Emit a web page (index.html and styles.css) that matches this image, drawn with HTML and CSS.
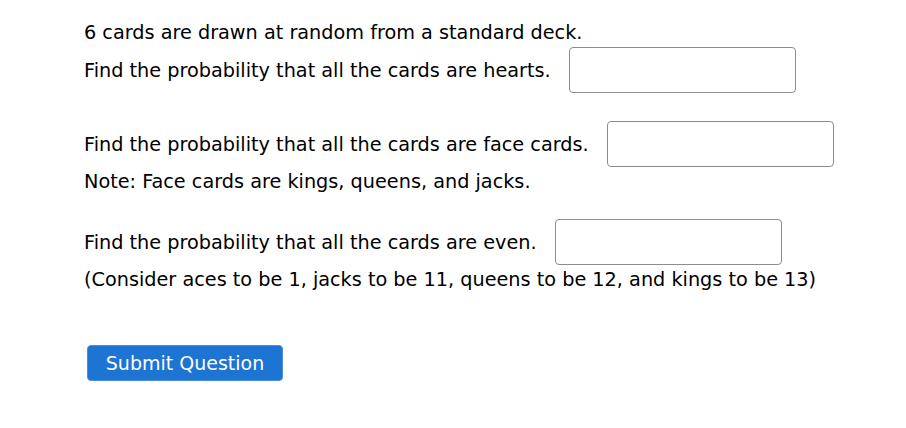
FILE: index.html
```html
<!DOCTYPE html>
<html><head><link rel="stylesheet" href="styles.css"></head>
<body>
<div class="question">
  <div class="row line">6 cards are drawn at random from a standard deck.</div>
  <div class="row field r2"><span>Find the probability that all the cards are hearts.</span><input class="answer" type="text"></div>
  <div class="row field r3"><span>Find the probability that all the cards are face cards.</span><input class="answer" type="text"></div>
  <div class="row line r4">Note: Face cards are kings, queens, and jacks.</div>
  <div class="row field r5"><span>Find the probability that all the cards are even.</span><input class="answer" type="text"></div>
  <div class="row line r6">(Consider aces to be 1, jacks to be 11, queens to be 12, and kings to be 13)</div>
  <button class="submit" type="button">Submit Question</button>
</div>
</body></html>
```
FILE: styles.css
```css
body{margin:0;background:#fff}
.question{padding:19px 0 0 84px;font-family:"DejaVu Sans",Verdana,sans-serif;font-size:19.25px;color:#000;display:flex;flex-direction:column;align-items:flex-start}
.row{display:flex;align-items:center;white-space:nowrap}
.line{height:26px}
.field{height:46px}
.r2{margin-top:2px}
.r3{margin-top:28px}
.r4{margin-top:1px}
.r5{margin-top:25px}
.r6{margin-top:1px}
.answer{box-sizing:border-box;width:227px;height:46px;margin:0 0 0 18px;border:1px solid #8c8c8c;border-radius:4px;background:#fff;padding:0 8px;font:inherit}
.submit{margin:53px 0 0 3px;box-sizing:border-box;width:196px;height:36px;background:#1d74d3;border:1px solid #4d8fd9;border-radius:4px;color:#fff;font-family:"DejaVu Sans",Verdana,sans-serif;font-size:19px;padding:0;cursor:pointer}
```
